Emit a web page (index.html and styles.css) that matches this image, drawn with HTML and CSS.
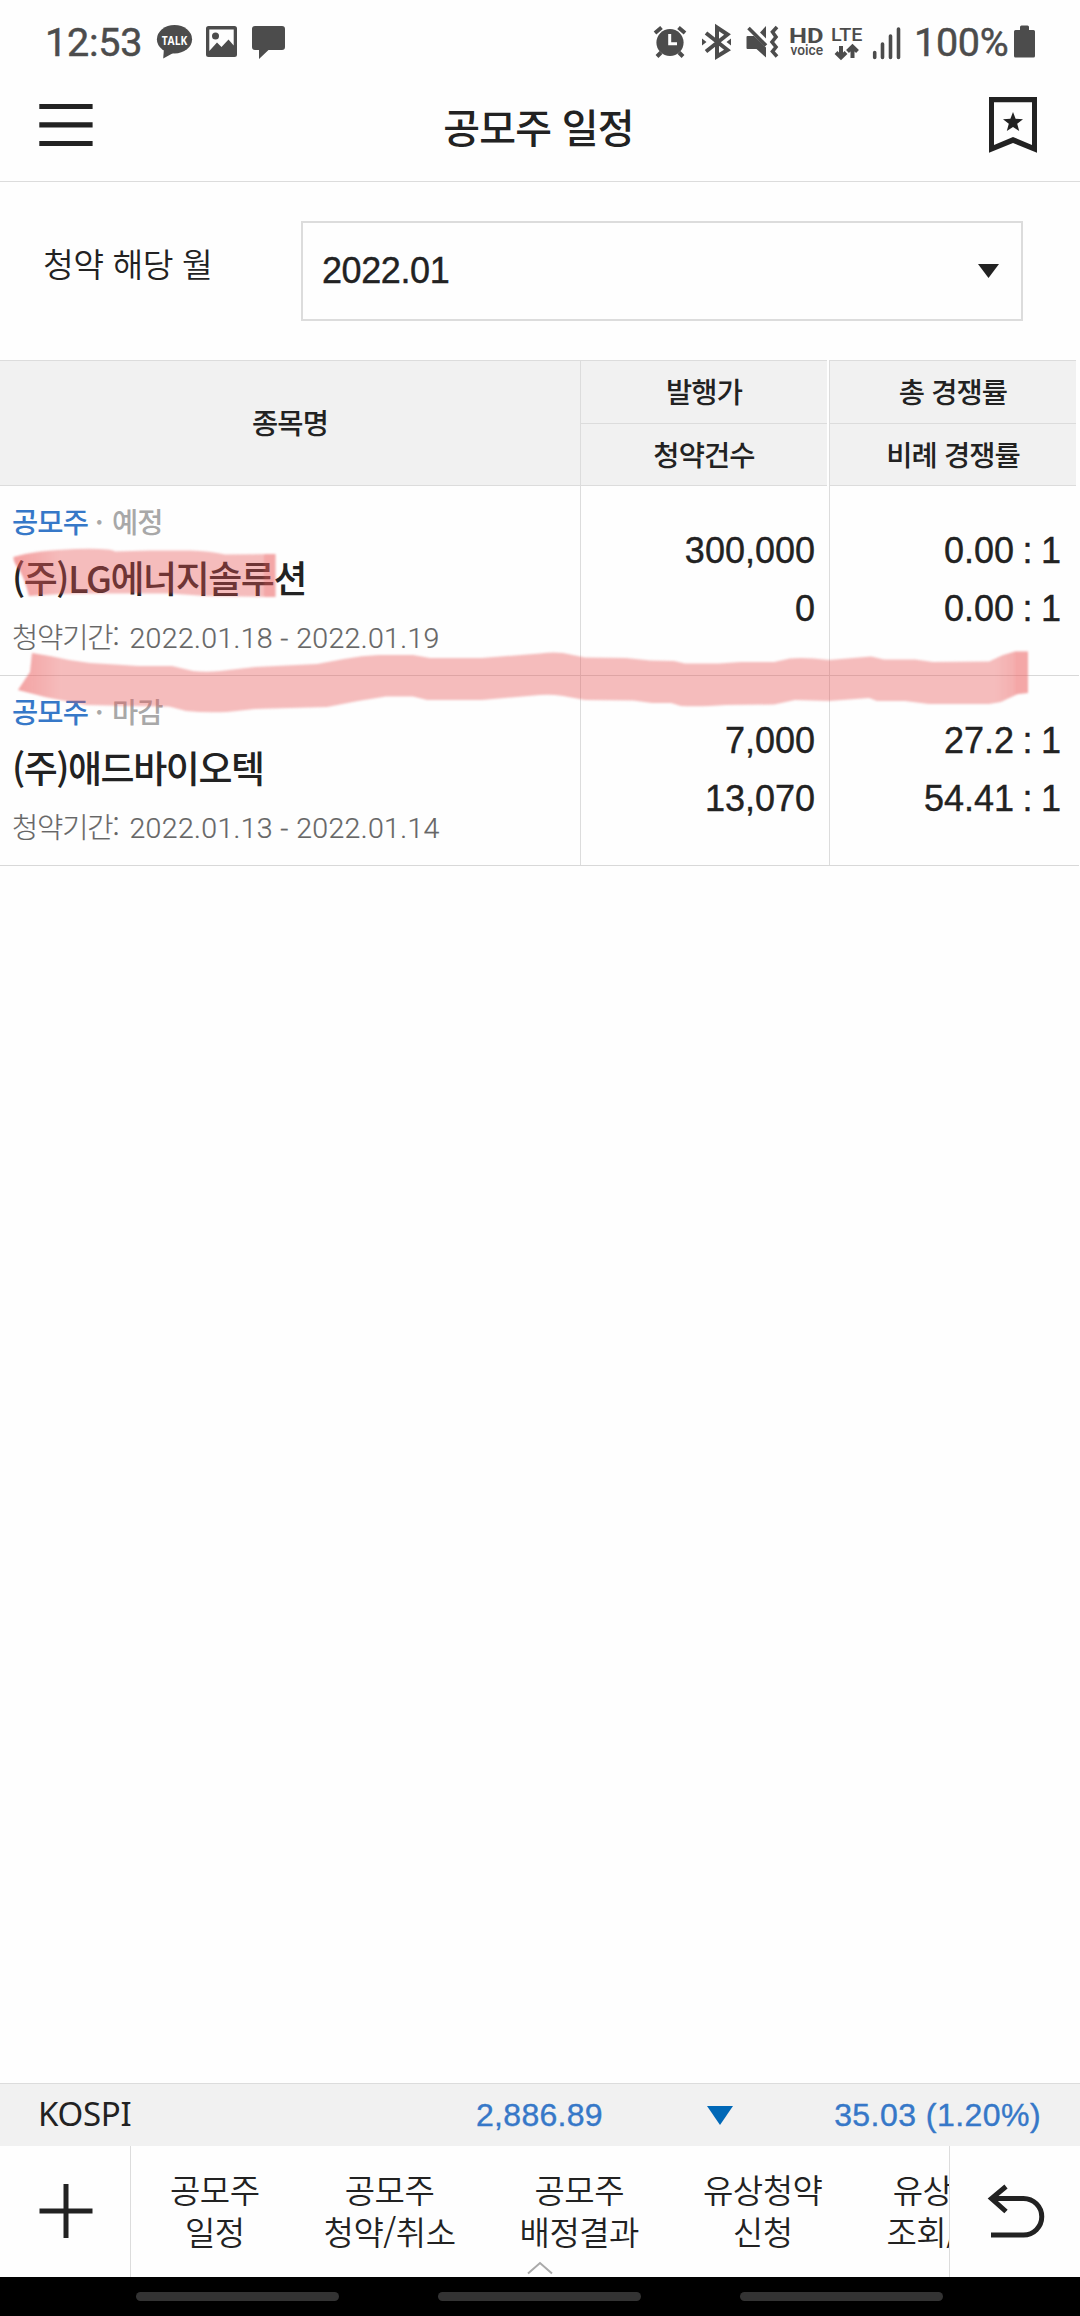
FILE: index.html
```html
<!DOCTYPE html>
<html lang="ko">
<head>
<meta charset="utf-8">
<title>공모주 일정</title>
<link rel="stylesheet" href="styles.css">
</head>
<body>
<div class="screen">
  <div class="status">
    <span class="clock">12:53</span>
    <svg width="48" height="82" viewBox="150 0 48 82"><ellipse cx="174.5" cy="39.2" rx="17.6" ry="14.2"/><path d="M164 48L163.2 58.5L175 52Z"/><text class="talk" x="161.7" y="45.3" textLength="25.5" lengthAdjust="spacingAndGlyphs">TALK</text></svg>
    <svg width="46" height="82" viewBox="198 0 46 82"><path fill-rule="evenodd" d="M208.5 26H234.500Q237 26 237 28.500V54.500Q237 57 234.500 57H208.500Q206 57 206 54.500V28.500Q206 26 208.500 26ZM209.300 29.500V51L217 42.500L221.500 47L228.500 39.500L233.700 45.500V29.500Z"/><circle cx="215.500" cy="36" r="3.500"/></svg>
    <svg width="50" height="82" viewBox="244 0 50 82"><path d="M255 26H282Q285 26 285 29V47Q285 50 282 50H268.500L259 59V50H255Q252 50 252 47V29Q252 26 255 26Z"/></svg>
    <span class="grow"></span>
    <svg width="44" height="82" viewBox="650 0 44 82"><circle cx="670" cy="42.500" r="13.600"/><path class="ln" d="M655 33L661.500 27.500M678.500 27.500L685 33M657 56.500L661 52.500M679 52.500L683 56.500"/><path class="hands" d="M669.700 34V43.800H677"/></svg>
    <svg width="46" height="82" viewBox="694 0 46 82"><path class="ln" d="M706 33L727.500 50L717 56.500V27.500L727.500 34.500L706 51.500"/><path d="M702 38.500L706.500 42L702 45.500ZM731 38.500L726.500 42L731 45.500Z"/></svg>
    <svg width="45" height="82" viewBox="740 0 45 82"><path d="M747.500 36H754L766 47.500V57.500L756.500 49H747.500Q746.500 49 746.500 48V37Q746.500 36 747.500 36ZM766 26V38.500L760 32.500Z"/><path class="ln thin" d="M748.500 28L766 45.500M777 27L772.500 32L776 37L772 42L776 47L772.500 51.500L777 56.500"/></svg>
    <svg width="42" height="82" viewBox="785 0 42 82"><text class="hd" x="789" y="43.300" textLength="34.500" lengthAdjust="spacingAndGlyphs">HD</text><text class="voice" x="790.500" y="55.300" textLength="32.500" lengthAdjust="spacingAndGlyphs">voice</text></svg>
    <svg width="42" height="82" viewBox="827 0 42 82"><text class="lte" x="831" y="41" textLength="31.500" lengthAdjust="spacingAndGlyphs">LTE</text><path class="ln" d="M841 46V57M836 52.500L841 57.500L846 52.500M852.500 58V48M847.500 51.500L852.500 46.500L857.500 51.500"/></svg>
    <svg width="41" height="82" viewBox="869 0 41 82"><path class="bars" d="M874.700 52.500V57.500M882.500 44V57.500M890.500 36V57.500M898.500 29V57.500"/></svg>
    <span class="pct">100%</span>
    <svg width="26" height="82" viewBox="1012 0 26 82"><path d="M1020 27Q1020 25.500 1021.500 25.500H1027.500Q1029 25.500 1029 27V30H1033.500Q1035 30 1035 31.500V56Q1035 57.500 1033.500 57.500H1015.500Q1014 57.500 1014 56V31.500Q1014 30 1015.500 30H1020Z"/></svg>
  </div>

  <header class="top">
    <svg width="54" height="56" viewBox="39 97 54 56"><path d="M39.300 104H92.600V109H39.300ZM39.300 122.300H92.600V127.500H39.300ZM39.300 141H92.600V146H39.300Z"/></svg>
    <h1>공모주 일정</h1>
    <svg width="48" height="56" viewBox="989 97 48 56"><path fill-rule="evenodd" d="M989 97H1037V152.700L1013 143L989 152.700ZM994 102.200V145L1013 137L1032 145V102.200Z"/><path d="M1013 112L1015.600 118.800L1023 119.200L1017.200 123.800L1019.200 131L1013 127L1006.800 131L1008.800 123.800L1003 119.200L1010.400 118.800Z"/></svg>
  </header>

  <section class="filter">
    <span class="label">청약 해당 월</span>
    <div class="select"><span>2022.01</span><svg width="21" height="14" viewBox="0 0 21 14"><path d="M0 0H21L10.500 14Z"/></svg></div>
  </section>

  <section class="table">
    <div class="thead">
      <div class="name-h">종목명</div>
      <div class="th2"><div>발행가</div><div>청약건수</div></div>
      <div class="th2"><div>총 경쟁률</div><div>비례 경쟁률</div></div>
    </div>
    <div class="row">
      <div class="info">
        <div class="tag"><b>공모주</b><i>·</i><span>예정</span></div>
        <div class="name">(주)LG에너지솔루션</div>
        <div class="period">청약기간: <span>2022.01.18 - 2022.01.19</span></div>
      </div>
      <div class="nums"><div>300,000</div><div>0</div></div>
      <div class="nums ratio"><div>0.00 : 1</div><div>0.00 : 1</div></div>
    </div>
    <div class="row">
      <div class="info">
        <div class="tag"><b>공모주</b><i>·</i><span>마감</span></div>
        <div class="name">(주)애드바이오텍</div>
        <div class="period">청약기간: <span>2022.01.13 - 2022.01.14</span></div>
      </div>
      <div class="nums"><div>7,000</div><div>13,070</div></div>
      <div class="nums ratio"><div>27.2 : 1</div><div>54.41 : 1</div></div>
    </div>
    <svg class="marker" width="1080" height="180" viewBox="0 540 1080 180">
      <defs>
        <linearGradient id="g1" gradientUnits="userSpaceOnUse" x1="14" y1="0" x2="62" y2="0"><stop offset="0" stop-color="#f06060" stop-opacity=".3"/><stop offset="1" stop-color="#f06060" stop-opacity="0"/></linearGradient>
        <linearGradient id="g2" gradientUnits="userSpaceOnUse" x1="995" y1="0" x2="1015" y2="0"><stop offset="0" stop-color="#f06060" stop-opacity="0"/><stop offset="1" stop-color="#f06060" stop-opacity=".15"/></linearGradient>
      </defs>
      <g class="ink">
        <path d="M13.500 557Q40 550 75 549T115 551.500L150 550.500H190Q210 551 225 554.500L275.500 554V597L240 596.500L205 596L170 593.500H100L60 594L29 596Q25 580 20 571Q13 562 13.500 557Z"/>
        <path d="M32 653L50 656L69 660L90 663L115 664.500L138 666H172L193 671Q206 672.500 220 671L255 667L317 664L344 659Q362 655.500 379 655H413L430 658H482L540 653.500Q552 652 563 653L585 657.500L626 658L650 660.500L674 661L685 663.500L719 663.500L740 662H774L790 658.500Q805 657 829 660L871 656.500L884 659.500H915L933 662L989 661.500L1003 655L1015 651.500H1028V693L1018 694L1001 702L989 704H929L905 701H877L869 698L829 701L795 700L774 704.500L726 705Q700 707 681 706L671 703L652 703L633 700.500L585 700L563 696Q550 694 540 695L482 700H427L413 696.500H386L358 701L327 707L290 708L255 709L227 712Q205 713 186 711L169 706.500L130 706L86 705L45 697L18 690L30 672Z"/>
      </g>
      <path d="M264 554H275.500V597H264ZM1015 651.500H1028V693L1015 694.500Z" fill="#f06060" fill-opacity=".24"/>
      <path d="M13.500 557Q35 550 62 549V594L29 596Q25 580 20 571Q13 562 13.500 557ZM32 653L62 659V701L18 690L30 672Z" fill="url(#g1)"/>
      <path d="M995 658L1015 651.500V695L995 703Z" fill="url(#g2)"/>
    </svg>
  </section>

  <div class="grow"></div>

  <div class="ticker">
    <span class="kospi">KOSPI</span>
    <span class="val">2,886.89</span>
    <svg width="26" height="19" viewBox="0 0 26 19"><path d="M0 0H26L13 19Z"/></svg>
    <span class="chg">35.03 (1.20%)</span>
  </div>
  <nav class="menu">
    <div class="plus"><svg width="54" height="54" viewBox="0 0 54 54"><path d="M24.500 0H29.500V24.500H53.500V29.500H29.500V54H24.500V29.500H.5V24.500H24.500Z"/></svg></div>
    <div class="items">
      <a>공모주<br>일정</a><a>공모주<br>청약/취소</a><a>공모주<br>배정결과</a><a>유상청약<br>신청</a><a>유상청약<br>조회/취소</a>
    </div>
    <div class="back"><svg width="60" height="60" viewBox="987 2182 60 60"><path d="M1006 2186.500L991.500 2198.500L1006 2211.500M991.500 2198.500H1023.500A18.200 18.200 0 0 1 1023.500 2235H991"/></svg></div>
    <svg class="chev" width="26" height="14" viewBox="0 0 26 14"><path d="M1 12.500L13 2L25 12.500"/></svg>
  </nav>
  <div class="sysnav"><i></i><i></i><i></i></div>
</div>
</body>
</html>
```
FILE: styles.css
```css
* { box-sizing: border-box; }
body { margin: 0; background: #fff; }
.screen {
  width: 1080px; height: 2316px; display: flex; flex-direction: column;
  font-family: "Noto Sans CJK KR", sans-serif; color: #222; overflow: hidden;
  background: #fefefe;
}
svg { display: block; flex: none; fill: #222; }
.grow { flex: 1; }

.status { display: flex; height: 82px; color: #4c4c4c; font-family: Roboto, sans-serif; font-size: 39.500px; line-height: 86px; }
.status svg { fill: #4c4c4c; }
.status .ln { fill: none; stroke: #4c4c4c; stroke-width: 4; }
.status .thin { stroke-width: 3.600; }
.status .hands { fill: none; stroke: #fff; stroke-width: 3; }
.bars { fill: none; stroke: #4c4c4c; stroke-width: 3.600; stroke-linecap: round; }
.clock { width: 150px; padding-left: 45px; letter-spacing: -.2px; -webkit-text-stroke: .5px; }
.pct { width: 102px; padding-left: 4px; letter-spacing: -.3px; -webkit-text-stroke: .5px; }
.status > svg:last-child { margin-right: 42px; }
.talk { font: 700 13px "Open Sans", sans-serif; fill: #fff; }
.hd { font: 700 20.500px Roboto, sans-serif; }
.voice { font: 500 14.500px Roboto, sans-serif; }
.lte { font: 500 19px Roboto, sans-serif; }

.top { height: 100px; padding: 15px 43px 0 39px; display: flex; justify-content: space-between; align-items: flex-start; border-bottom: 1px solid #dcdcdc; }
.top h1 { margin: -1px 5px 0 0; font-size: 40px; font-weight: 500; line-height: 60px; letter-spacing: -.8px; }

.filter { height: 178px; padding: 39px 57px 0 43px; display: flex; justify-content: space-between; }
.label { font-size: 33.500px; font-weight: 350; line-height: 83px; letter-spacing: -.5px; }
.select { width: 722px; height: 100px; border: 2px solid #dcdcdc; padding: 0 22px 0 19px; display: flex; justify-content: space-between; align-items: center; font: 36px/96px "Liberation Sans", sans-serif; letter-spacing: -.4px; -webkit-text-stroke: .4px; }

.table { position: relative; }
.thead { display: flex; height: 126px; font-size: 28.500px; font-weight: 500; letter-spacing: -.9px; text-align: center; }
.thead > div { background: #f1f1f1; border-top: 1px solid #dcdcdc; border-bottom: 1px solid #dcdcdc; }
.name-h { width: 580px; line-height: 121px; }
.th2 { width: 247px; border-left: 1px solid #dcdcdc; margin-right: 2px; line-height: 59px; }
.th2 div:first-child { height: 63px; border-bottom: 1px solid #dcdcdc; }
.row { display: flex; height: 190px; width: 1079px; border-bottom: 1px solid #d8d8d8; }
.info { width: 580px; padding: 15px 0 0 12px; }
.tag { display: flex; height: 44px; line-height: 40px; font-size: 28.500px; font-weight: 500; letter-spacing: -.9px; color: #a8a8a8; }
.tag b { font-weight: 500; color: #3678c8; width: 83px; }
.tag i { font-style: normal; width: 17px; }
.name { height: 67px; line-height: 64px; font-size: 37px; font-weight: 500; letter-spacing: -1.450px; white-space: nowrap; }
.period { height: 44px; line-height: 48px; font-size: 28.500px; font-weight: 300; letter-spacing: -1.100px; color: #666; white-space: nowrap; -webkit-text-stroke: .2px; }
.period span { font-family: Roboto, sans-serif; letter-spacing: .350px; margin-left: 4px; }
.nums { width: 249px; border-left: 1px solid #dcdcdc; padding: 36px 14px 0 0; text-align: right; font: 36px/58px "Liberation Sans", sans-serif; -webkit-text-stroke: .4px; }
.ratio { padding-right: 17px; word-spacing: -1.500px; }
.marker { position: absolute; left: 0; top: 180px; pointer-events: none; filter: blur(1px); }
.ink { fill: #e85454; fill-opacity: .39; }

.ticker { height: 63px; border-top: 1px solid #dcdcdc; background: #f1f1f1; display: flex; align-items: center; font: 32px/60px "Liberation Sans", sans-serif; color: #3678c8; -webkit-text-stroke: .4px; }
.kospi { width: 476px; padding-left: 38px; margin-top: -2px; font-family: "Noto Sans", sans-serif; font-size: 33px; letter-spacing: -.3px; color: #222; -webkit-text-stroke: 0; }
.val { width: 231px; letter-spacing: .3px; }
.ticker svg { fill: #0068b7; }
.chg { margin-left: auto; padding-right: 39px; letter-spacing: .450px; }

.menu { position: relative; height: 131px; display: flex; }
.plus { width: 131px; border-right: 1px solid #dcdcdc; padding: 38px 0 0 39px; }
.items { width: 818px; display: flex; gap: 64px; padding: 23px 0 0 39px; overflow: hidden; }
.items a { flex: none; font-size: 33px; font-weight: 350; line-height: 41.500px; letter-spacing: -.5px; text-align: center; white-space: nowrap; }
.back { width: 131px; border-left: 1px solid #dcdcdc; padding: 36px 0 0 37px; }
.back path { fill: none; stroke: #222; stroke-width: 5; }
.chev { position: absolute; left: 527px; top: 115px; }
.chev path { fill: none; stroke: #aaa; stroke-width: 2; }
.sysnav { height: 39px; background: #000; display: flex; justify-content: center; gap: 99px; padding: 15px 1px 0 0; }
.sysnav i { width: 203px; height: 9px; border-radius: 5px; background: #333; }
```
